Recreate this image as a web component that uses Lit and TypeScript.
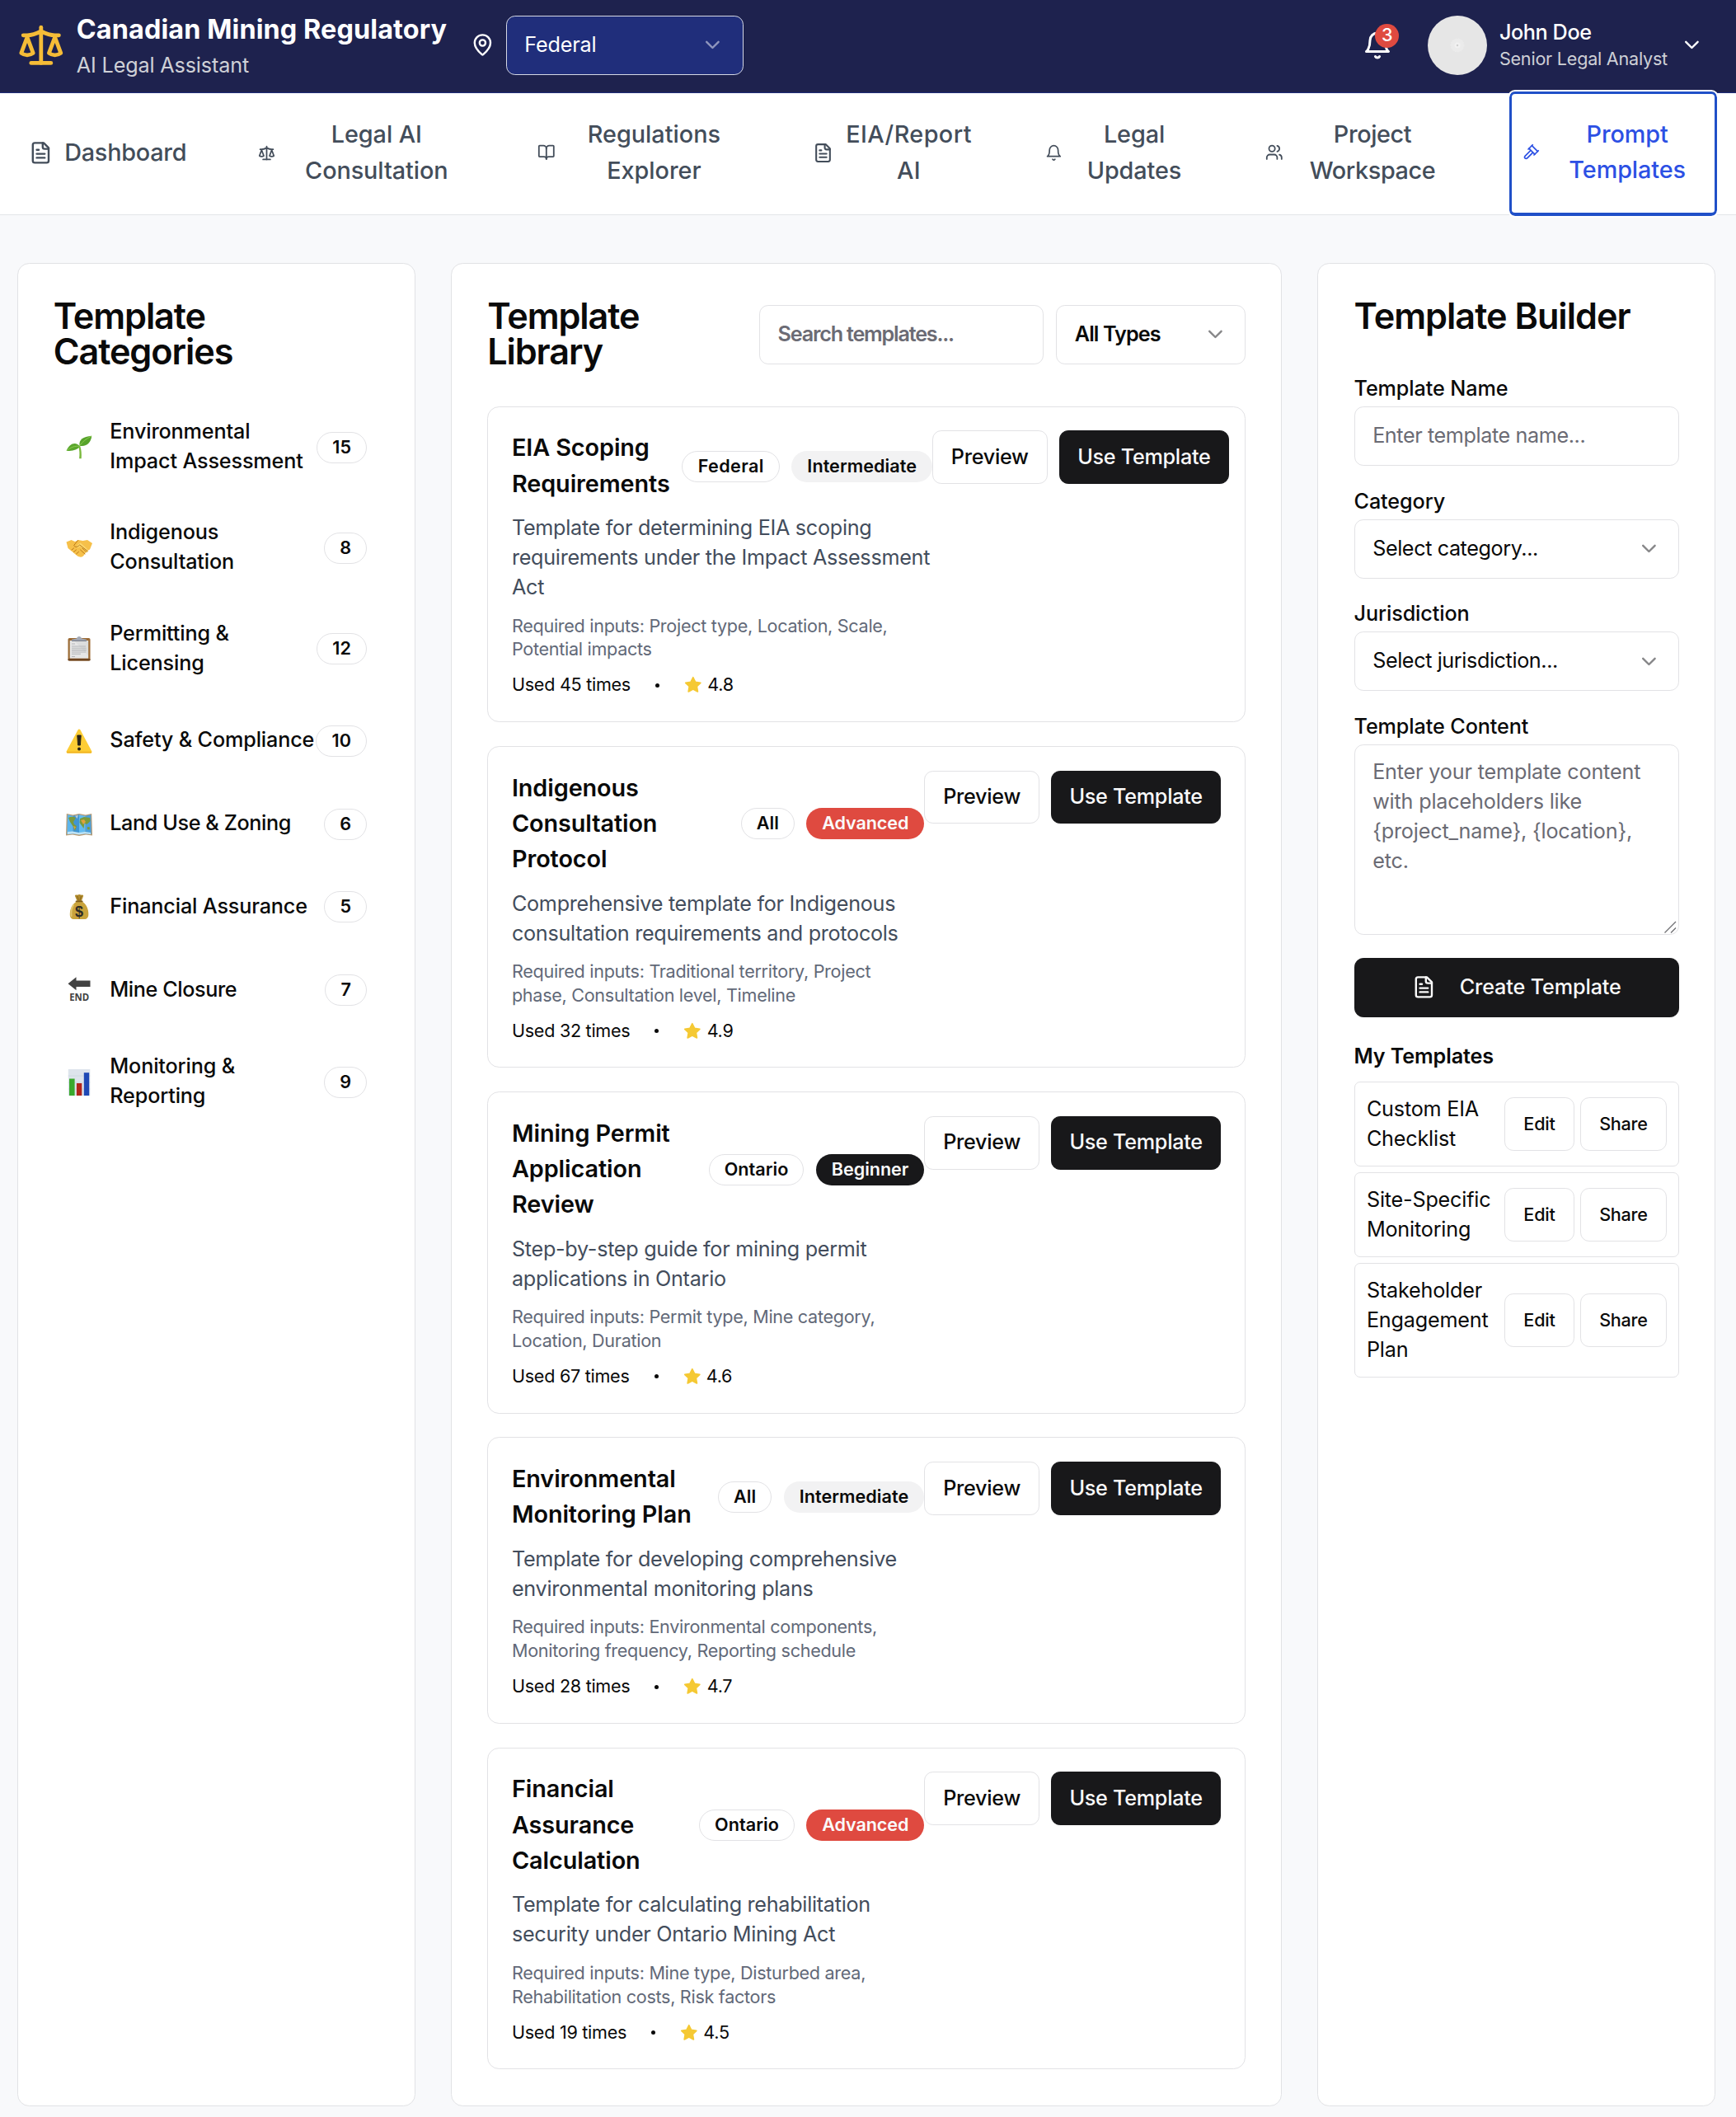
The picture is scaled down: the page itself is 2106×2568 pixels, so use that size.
import { LitElement, html, svg, css, TemplateResult, SVGTemplateResult } from "lit";
import { customElement, property } from "lit/decorators.js";

const ICONS: Record<string, SVGTemplateResult> = {
  scale: svg`<path d="m16 16 3-8 3 8c-.87.65-1.92 1-3 1s-2.13-.35-3-1Z"/><path d="m2 16 3-8 3 8c-.87.65-1.92 1-3 1s-2.13-.35-3-1Z"/><path d="M7 21h10"/><path d="M12 3v18"/><path d="M3 7h2c2 0 5-1 7-2 2 1 5 2 7 2h2"/>`,
  pin: svg`<path d="M20 10c0 4.993-5.539 10.193-7.399 11.799a1 1 0 0 1-1.202 0C9.539 20.193 4 14.993 4 10a8 8 0 0 1 16 0"/><circle cx="12" cy="10" r="3"/>`,
  chevron: svg`<path d="m6 9 6 6 6-6"/>`,
  bell: svg`<path d="M6 8a6 6 0 0 1 12 0c0 7 3 9 3 9H3s3-2 3-9"/><path d="M10.3 21a1.94 1.94 0 0 0 3.4 0"/>`,
  file: svg`<path d="M15 2H6a2 2 0 0 0-2 2v16a2 2 0 0 0 2 2h12a2 2 0 0 0 2-2V7Z"/><path d="M14 2v4a2 2 0 0 0 2 2h4"/><path d="M10 9H8"/><path d="M16 13H8"/><path d="M16 17H8"/>`,
  book: svg`<path d="M12 7v14"/><path d="M3 18a1 1 0 0 1-1-1V4a1 1 0 0 1 1-1h5a4 4 0 0 1 4 4 4 4 0 0 1 4-4h5a1 1 0 0 1 1 1v13a1 1 0 0 1-1 1h-6a3 3 0 0 0-3 3 3 3 0 0 0-3-3z"/>`,
  users: svg`<path d="M16 21v-2a4 4 0 0 0-4-4H6a4 4 0 0 0-4 4v2"/><circle cx="9" cy="7" r="4"/><path d="M22 21v-2a4 4 0 0 0-3-3.87"/><path d="M16 3.13a4 4 0 0 1 0 7.75"/>`,
  gavel: svg`<path d="m14 13-7.5 7.5c-.83.83-2.17.83-3 0a2.12 2.12 0 0 1 0-3L11 10"/><path d="m16 16 6-6"/><path d="m8 8 6-6"/><path d="m9 7 8 8"/><path d="m21 11-8-8"/>`,
  star: svg`<path fill="currentColor" d="M12 2l3.09 6.26L22 9.27l-5 4.87 1.18 6.88L12 17.77l-6.18 3.25L7 14.14 2 9.27l6.91-1.01L12 2z"/>`,
};

function icon(name: string, size: number): TemplateResult {
  return html`<svg class="icon" width=${size} height=${size} viewBox="0 0 24 24" fill="none" stroke="currentColor" stroke-width="2" stroke-linecap="round" stroke-linejoin="round">${ICONS[name]}</svg>`;
}

const PICTOS: Record<string, SVGTemplateResult> = {
  seedling: svg`<path d="M17.2 14c1.6 4.600 1.900 9.500 1.500 15.200h-2.600c.7-5.400.3-10.600-.8-14.600z" fill="#79b83c"/><path d="M16.500 13.700C15.500 6.500 20.500 2.500 31.300 1.800 30.200 10.200 25.500 15 16.500 13.700z" fill="#57a32b"/><path d="M17 13.300C20 8.500 25 5 31 2" stroke="#8bcb4e" stroke-width="1" fill="none"/><path d="M17 14.600C12.500 8.600 4.500 10 .5 19.800 8 20.700 13.500 19 17 14.600z" fill="#5aa72e"/><path d="M1 19.500C6 15.500 11 13.700 16.500 14.300" stroke="#8bcb4e" stroke-width="1" fill="none"/>`,
  handshake: svg`<path d="M.5 8.500 6.500 6l4.500 2 4-2 5.500 1L26 6l6 4-3 7.500-3 1.500-5 6.500c-2.500 2-5 1-7 0L8 20.500 2.500 16z" fill="#f6c04a"/><path d="m14 12 3.500-2.500 8.500 7.500 1 2.500-1.500 1.500-8-7-3 1.500-2.500-.8z" fill="#fbd86f"/><path d="m14.500 6.500-4.800 6c1.500 3.500 5 1.500 7-.5l9.500 7.500M7 18l2.500-2M9.500 20.500l3-2.500M12.500 23l3-2.700M17.500 18l5.500 5M20 16l5 4.500" stroke="#bb7a18" stroke-width="1" stroke-linecap="round" fill="none"/>`,
  clipboard: svg`<rect x="2.500" y="3" width="27" height="27.500" rx="1.800" fill="#9c6b35"/><rect x="2.500" y="28" width="27" height="2.500" rx="1.200" fill="#6e4520"/><path d="M4.800 6h22.400v21.500H4.800z" fill="#dcdddd"/><path d="M4.800 6h5L27 24v3.500H4.800z" fill="#ededed" opacity=".6"/><path d="M7 10h4M7 13h17M7 15.300h17.500M7 17.600h17.500M7 20h17M7 22.300h11M7 25.500h4" stroke="#b4b6b9" stroke-width="1.100"/><path d="M7 6.500V4.800l6-1.300c.5-3.500 5.500-3.500 6 0l6 1.300v1.700z" fill="#a3a9b5"/><path d="M7 6.300h18" stroke="#6f7581" stroke-width="1"/>`,
  warning: svg`<path d="M16 3.200 29.800 29H2.200z" fill="#fdcd35" stroke="#fdcd35" stroke-width="3.400" stroke-linejoin="round"/><path d="M1 29.500h30" stroke="#f0b021" stroke-width="1.500"/><path d="M13.800 9h4.400l-.8 12h-2.800z" fill="#2a2416" stroke="#2a2416" stroke-linejoin="round"/><circle cx="16" cy="25.600" r="2" fill="#2a2416"/>`,
  map: svg`<path d="m.8 3 7.800 1.500L16 3l7.800 1.500L31.200 3 32 29.500l-7.800-1L16 30l-8-1.500-8 1z" fill="#b89b73"/><path d="m2 4.300 6.600 1.400v21.500L1.300 28z" fill="#5cb5ec"/><path d="m8.600 5.700 7.400-1.400v24l-7.400-1.100z" fill="#3f95d4"/><path d="m16 4.300 7.600 1.400v21.500L16 28.300z" fill="#62bbf0"/><path d="m23.600 5.700 6.600-1.400.5 23.700-7.100-.8z" fill="#4aa0dd"/><path d="M3 8c3-2 6-1.500 9 0l-3 5 1 3 3 2-2 6-2-5-4-6zM17 9l5-2 7 1 .5 4-3 3-2 1-2-2-1 7-2-3-3-4zM26 19l3 .5-.5 3-2.500-.5z" fill="#7a9a3c"/><path d="m18 11 4-1 2 3-3 3zM9 18l3 1-1.500 3z" fill="#dfa23d"/><path d="M11 5.500 15 5l-1.500 4z" fill="#b7c9d6"/><path d="m2 25 6-.5 8 1.500 7-1 7 1v2l-7-.8-7 1.200-8-1.200-6 .8z" fill="#bfe3f5"/>`,
  money: svg`<path d="M11 3c-.5-1.500 1.500-2 3-1.200C15 .8 17.500.8 18.500 1.800 20.500 1 21.500 2 21 3.200L18.800 9h-5.200z" fill="#b18b2d"/><path d="m13.500 2.800 2 5M18.500 2.800l-1.500 5" stroke="#7e5d18" stroke-width=".8"/><path d="M13 9.500h6.500c5 3 8.200 9 7.800 16 0 3.500-2 5.500-5 5.500H10c-3.300 0-5.200-2-5.200-5.500C4.700 18.500 8 12.500 13 9.500z" fill="#c9a33c"/><path d="M9 14c-2.500 3.500-3 8-2.500 13" stroke="#e2c772" stroke-width="2" stroke-linecap="round" fill="none"/><path d="M12.500 9.300h7.200" stroke="#7d5c1c" stroke-width="1.800" stroke-linecap="round"/><text x="16" y="27.500" text-anchor="middle" font-family="Liberation Sans, sans-serif" font-weight="700" font-size="18" fill="#2d2b26">$</text>`,
  end: svg`<path d="M2.500 8.300 12.500.3v4.200h17v7.400h-17v4.300z" fill="#424242"/><text x="16.200" y="28.800" text-anchor="middle" font-family="Open Sans, sans-serif" font-weight="700" font-size="12.500" textLength="24" lengthAdjust="spacingAndGlyphs" fill="#424242">END</text>`,
  chart: svg`<rect x="2.800" y="0" width="26.500" height="32" fill="#dde4ec"/><path d="M2.800 8h26.500M2.800 16h26.500M2.800 24h26.500" stroke="#cbd5e0" stroke-width=".8"/><rect x="4" y="11.500" width="6.600" height="20.500" fill="#3aa92d"/><rect x="12.900" y="17" width="6.400" height="15" fill="#b3251b"/><rect x="21.800" y="4.200" width="6.400" height="27.800" fill="#1f49b5"/>`,
};

interface NavEntry { name: string; size: number; lines: string[]; cls: string; }
const NAV: NavEntry[] = [
  { name: "file", size: 28.8, lines: ["Dashboard"], cls: "n1" },
  { name: "scale", size: 21, lines: ["Legal AI", "Consultation"], cls: "n2" },
  { name: "book", size: 21.6, lines: ["Regulations", "Explorer"], cls: "n3" },
  { name: "file", size: 25, lines: ["EIA/Report", "AI"], cls: "n4" },
  { name: "bell", size: 20.8, lines: ["Legal", "Updates"], cls: "n5" },
  { name: "users", size: 21.6, lines: ["Project", "Workspace"], cls: "n6" },
  { name: "gavel", size: 21, lines: ["Prompt", "Templates"], cls: "active" },
];

const CATEGORIES: [string, string[], number][] = [
  ["seedling", ["Environmental", "Impact Assessment"], 15],
  ["handshake", ["Indigenous", "Consultation"], 8],
  ["clipboard", ["Permitting &", "Licensing"], 12],
  ["warning", ["Safety & Compliance"], 10],
  ["map", ["Land Use & Zoning"], 6],
  ["money", ["Financial Assurance"], 5],
  ["end", ["Mine Closure"], 7],
  ["chart", ["Monitoring &", "Reporting"], 9],
];

interface Card { title: string[]; scope: string; level: string; desc: string[]; inputs: string[]; used: number; rating: string; wide?: boolean; }
const CARDS: Card[] = [
  { title: ["EIA Scoping", "Requirements"], scope: "Federal", level: "Intermediate", desc: ["Template for determining EIA scoping", "requirements under the Impact Assessment", "Act"], inputs: ["Required inputs: Project type, Location, Scale,", "Potential impacts"], used: 45, rating: "4.8", wide: true },
  { title: ["Indigenous", "Consultation", "Protocol"], scope: "All", level: "Advanced", desc: ["Comprehensive template for Indigenous", "consultation requirements and protocols"], inputs: ["Required inputs: Traditional territory, Project", "phase, Consultation level, Timeline"], used: 32, rating: "4.9" },
  { title: ["Mining Permit", "Application", "Review"], scope: "Ontario", level: "Beginner", desc: ["Step-by-step guide for mining permit", "applications in Ontario"], inputs: ["Required inputs: Permit type, Mine category,", "Location, Duration"], used: 67, rating: "4.6" },
  { title: ["Environmental", "Monitoring Plan"], scope: "All", level: "Intermediate", desc: ["Template for developing comprehensive", "environmental monitoring plans"], inputs: ["Required inputs: Environmental components,", "Monitoring frequency, Reporting schedule"], used: 28, rating: "4.7" },
  { title: ["Financial", "Assurance", "Calculation"], scope: "Ontario", level: "Advanced", desc: ["Template for calculating rehabilitation", "security under Ontario Mining Act"], inputs: ["Required inputs: Mine type, Disturbed area,", "Rehabilitation costs, Risk factors"], used: 19, rating: "4.5" },
];

const MINE: string[][] = [["Custom EIA", "Checklist"], ["Site-Specific", "Monitoring"], ["Stakeholder", "Engagement", "Plan"]];

const rows = (lines: string[]) => lines.map((l, i) => (i ? html`<br />${l}` : html`${l}`));

const shared = css`
  :host, * { box-sizing: border-box; }
  .icon { display: block; flex: none; }
  h2, h3, p { margin: 0; }
  h2 { font-size: 43.2px; line-height: 43.2px; font-weight: 600; letter-spacing: -0.025em; margin-top: -1.8px; }
  .btn { display: flex; align-items: center; justify-content: center; border: 1px solid #e2e2e5; border-radius: 10.8px; background: #fff; white-space: nowrap; height: 64.8px; font-size: 25.2px; font-weight: 500; letter-spacing: -0.011em; padding-bottom: 2px; }
  .dark { background: #18181a; border-color: #18181a; color: #fafafa; }
  .badge { display: flex; align-items: center; flex: none; border: 1px solid #e2e2e5; border-radius: 19px; height: 38px; padding: 0 18px 2px; font-size: 21.6px; font-weight: 600; letter-spacing: 0.002em; white-space: nowrap; }
  .field { display: flex; align-items: center; justify-content: space-between; height: 72px; border: 1px solid #e2e2e5; border-radius: 10.8px; padding: 0 21.6px 2px; font-size: 25.2px; letter-spacing: -0.016em; white-space: nowrap; background: #fff; }
  .chev { color: #868688; display: flex; padding-top: 1.5px; }
  .muted { color: #6b6b74; }
`;

@customElement("app-header")
export class AppHeader extends LitElement {
  static styles = [shared, css`
    :host { display: flex; align-items: flex-start; height: 113px; padding: 0 39.300px 0 20.800px; background: #1e224e; border-bottom: 1px solid #202d7a; color: #fff; }
    .logo { color: #f5bc37; margin: 26.200px 14.4px 0 0; }
    .brand { width: 477.800px; padding-top: 12.300px; white-space: nowrap; }
    .name { font-size: 32.4px; line-height: 48px; font-weight: 700; letter-spacing: 0.003em; }
    .sub { margin-top: .900px; font-size: 25.2px; line-height: 36px; color: #ced0d6; letter-spacing: -0.006em; }
    .pin { margin: 40.100px 14.4px 0 0; }
    .field { width: 288px; margin-top: 19px; background: #202e7b; border-color: #d5d8e4; letter-spacing: -0.008em; }
    .field .chev { color: #8f96bd; }
    .grow { flex: 1; }
    .alerts { position: relative; margin: 37px 42.700px 0 0; }
    .count { position: absolute; left: 15px; top: -8px; width: 28.8px; height: 28.8px; border-radius: 50%; background: #df4a40; font-size: 21.6px; line-height: 27.500px; text-align: center; font-weight: 500; }
    .avatar { display: flex; align-items: center; justify-content: center; width: 72px; height: 72px; margin: 19px 14.800px 0 0; border-radius: 50%; background: #e6e6e6; }
    .who { width: 219px; padding-top: 21px; white-space: nowrap; }
    .person { font-size: 25.2px; line-height: 36px; font-weight: 500; letter-spacing: -0.016em; }
    .role { font-size: 21.6px; line-height: 28.8px; color: #ced0d6; letter-spacing: -0.011em; }
    .more { margin-top: 40px; }
  `];
  render() {
    return html`
      <div class="logo">${icon("scale", 57.6)}</div>
      <div class="brand"><div class="name">Canadian Mining Regulatory</div><div class="sub">AI Legal Assistant</div></div>
      <div class="pin">${icon("pin", 28.8)}</div>
      <div class="field"><span>Federal</span><span class="chev">${icon("chevron", 28.8)}</span></div>
      <div class="grow"></div>
      <div class="alerts">${icon("bell", 36)}<span class="count">3</span></div>
      <div class="avatar"><svg width="18" height="18" viewBox="0 0 18 18"><circle cx="9" cy="9" r="8" fill="#ebebeb" stroke="#eee" stroke-dasharray="1.500 2"/><circle cx="9" cy="9" r="3.500" fill="#f1f1f1"/><circle cx="9" cy="9" r="1.200" fill="#cfcfcf"/></svg></div>
      <div class="who"><div class="person">John Doe</div><div class="role">Senior Legal Analyst</div></div>
      <div class="more">${icon("chevron", 28.8)}</div>`;
  }
}

@customElement("app-nav")
export class AppNav extends LitElement {
  static styles = [shared, css`
    :host { display: grid; grid-template-columns: 278.300px 338.700px 333.800px 282.300px 267.100px 295.400px 252px; height: 148px; padding-left: 35px; background: #fff; border-bottom: 1px solid #e3e5e9; color: #434d5a; }
    .item { display: flex; align-items: center; height: 147px; padding-bottom: 3px; font-size: 28.8px; line-height: 43.2px; font-weight: 500; letter-spacing: -0.003em; white-space: nowrap; text-align: center; }
    .item span { margin-top: -1px; }
    .n1 { gap: 14.4px; letter-spacing: -0.008em; } .n2 { gap: 35.800px; } .n3 { gap: 39.200px; letter-spacing: 0; } .n4 { gap: 15.500px; letter-spacing: 0.014em; }
    .n5 { gap: 29.800px; } .n6 { gap: 32px; letter-spacing: -0.013em; }
    .active { position: relative; gap: 35.200px; height: 150.300px; margin-top: -1.700px; padding: 0 0 2px 13.600px; color: #2c50e4; border: 3.500px solid #2050c8; border-bottom-width: 4.500px; border-radius: 7px; outline: 2px solid #fff; background: #fff; }
  `];
  render() {
    return html`${NAV.map((n) => html`<div class="item ${n.cls}">${icon(n.name, n.size)}<span>${rows(n.lines)}</span></div>`)}`;
  }
}

@customElement("category-list")
export class CategoryList extends LitElement {
  static styles = [shared, css`
    :host { display: block; }
    h2 { margin-left: -0.700px; }
    .list { display: flex; flex-direction: column; gap: 7.2px; margin-top: 37px; }
    .row { display: flex; align-items: center; padding: 21.6px 14.4px; }
    .pic { display: block; flex: none; margin-right: 21.500px; overflow: visible; }
    .label { flex: 1; min-width: 0; display: flex; align-items: center; min-height: 50.4px; font-size: 25.2px; line-height: 36px; font-weight: 500; letter-spacing: -0.006em; white-space: nowrap; }
    .label span { margin: -1.500px 0 1.500px; }
    .row:nth-child(5) .label, .row:nth-child(7) .label { letter-spacing: -0.016em; }
    .row .badge { padding-left: 18.2px; padding-right: 18.2px; }
  `];
  render() {
    return html`<h2>Template<br />Categories</h2>
      <div class="list">${CATEGORIES.map(([pic, lines, n]) => html`<div class="row">
        <svg class="pic" width="32" height="32" viewBox="0 0 32 32">${PICTOS[pic]}</svg>
        <span class="label"><span>${rows(lines)}</span></span><span class="badge">${n}</span></div>`)}</div>`;
  }
}

@customElement("template-card")
export class TemplateCard extends LitElement {
  @property({ attribute: false }) card!: Card;
  static styles = [shared, css`
    :host { display: flex; border: 1px solid #e2e2e5; border-radius: 14.4px; padding: 28.8px; }
    .main { flex: none; width: 500.300px; }
    .main.wide { width: 510px; }
    .top { display: flex; align-items: center; gap: 14.4px; }
    h3 { flex: 1; min-width: 0; font-size: 28.8px; line-height: 43.2px; font-weight: 600; letter-spacing: -0.003em; white-space: nowrap; margin: -1px 0 1px; }
    .level { border-color: transparent; }
    .Federal { padding-left: 18.200px; padding-right: 18.200px; letter-spacing: 0.018em; }
    .Intermediate { background: #f2f2f3; }
    .Advanced { background: #df4a40; color: #fafafa; letter-spacing: -0.006em; }
    .Beginner { background: #18181a; color: #fafafa; letter-spacing: -0.003em; }
    .desc { margin-top: 13.400px; font-size: 25.2px; line-height: 36px; color: #434d5c; letter-spacing: -0.0115em; white-space: nowrap; }
    .inputs { margin-top: 14.400px; font-size: 21.6px; line-height: 28.8px; color: #626978; letter-spacing: -0.014em; white-space: nowrap; }
    .stats { display: flex; align-items: center; margin-top: 14.200px; margin-bottom: 1.200px; font-size: 21.6px; line-height: 28.8px; letter-spacing: -0.0132em; }
    .dot { width: 5px; height: 5px; border-radius: 50%; background: #0a0a0a; margin: 1px 30px 0 30px; }
    .star { color: #f5c934; margin: 1px 6.7px 0 0; }
    .actions { display: flex; gap: 14.400px; flex: none; }
    .preview { width: 139.700px; }
    .use { width: 205.600px; }
  `];
  render() {
    const c = this.card;
    return html`<div class="main ${c.wide ? "wide" : ""}">
        <div class="top"><h3>${rows(c.title)}</h3><span class="badge ${c.scope}">${c.scope}</span><span class="badge level ${c.level}">${c.level}</span></div>
        <p class="desc">${rows(c.desc)}</p>
        <p class="inputs">${rows(c.inputs)}</p>
        <div class="stats"><span>Used ${c.used} times</span><span class="dot"></span><span class="star">${icon("star", 21.6)}</span><span>${c.rating}</span></div>
      </div>
      <div class="actions"><div class="btn preview">Preview</div><div class="btn dark use">Use Template</div></div>`;
  }
}

@customElement("template-library")
export class TemplateLibrary extends LitElement {
  static styles = [shared, css`
    :host { display: block; }
    .head { display: flex; align-items: center; height: 86.4px; gap: 15px; margin-bottom: 42.800px; }
    h2 { flex: 1; margin-top: -3px; }
    .field { font-weight: 600; margin-top: -1px; }
    .search { width: 345.200px; letter-spacing: -0.048em; }
    .types { width: 229.800px; letter-spacing: -0.037em; }
    .cards { display: flex; flex-direction: column; gap: 28.6px; }
  `];
  render() {
    return html`<div class="head"><h2>Template<br />Library</h2>
        <div class="field search muted">Search templates...</div>
        <div class="field types"><span>All Types</span><span class="chev">${icon("chevron", 28.8)}</span></div></div>
      <div class="cards">${CARDS.map((c) => html`<template-card .card=${c}></template-card>`)}</div>`;
  }
}

@customElement("template-builder")
export class TemplateBuilder extends LitElement {
  static styles = [shared, css`
    :host { display: block; margin-right: -0.800px; }
    .form { margin-top: 52px; display: flex; flex-direction: column; }
    h2 { letter-spacing: -0.023em; }
    .label { height: 36px; font-size: 25.2px; line-height: 28.800px; font-weight: 500; letter-spacing: -0.004em; }
    .field { margin-bottom: 28.8px; }
    .area { position: relative; height: 230.4px; margin-bottom: 28.6px; padding: 13.500px 21.6px; border: 1px solid #e2e2e5; border-radius: 10.8px; font-size: 25.2px; line-height: 36px; letter-spacing: -0.007em; white-space: nowrap; }
    .grip { position: absolute; right: 1px; bottom: 0; }
    .create { height: 72px; gap: 28.8px; letter-spacing: -0.005em; }
    .mine { margin-top: 28.500px; font-size: 25.2px; line-height: 36px; font-weight: 600; letter-spacing: -0.005em; }
    .items { display: flex; flex-direction: column; gap: 7.2px; margin-top: 13.8px; }
    .item { display: flex; align-items: center; gap: 7.2px; padding: 14.4px; border: 1px solid #e2e2e5; border-radius: 7px; }
    .name { flex: 1; font-size: 25.2px; line-height: 36px; letter-spacing: -0.008em; white-space: nowrap; margin: -0.500px 0 0.500px; }
    .item .btn { font-size: 21.6px; }
    .edit { width: 84.600px; }
    .share { width: 105px; }
  `];
  render() {
    return html`<h2>Template Builder</h2>
      <div class="form">
        <div class="label">Template Name</div><div class="field muted">Enter template name...</div>
        <div class="label">Category</div><div class="field"><span>Select category...</span><span class="chev">${icon("chevron", 28.8)}</span></div>
        <div class="label">Jurisdiction</div><div class="field"><span>Select jurisdiction...</span><span class="chev">${icon("chevron", 28.8)}</span></div>
        <div class="label">Template Content</div>
        <div class="area muted">Enter your template content<br />with placeholders like<br />{project_name}, {location},<br />etc.
          <svg class="grip" width="17" height="17" viewBox="0 0 17 17"><path d="M1.500 15.500 15 2M9 15.500 15 9.500" stroke="#6f6f73" stroke-width="1.300"/></svg></div>
        <div class="btn dark create">${icon("file", 28.8)}<span>Create Template</span></div>
        <div class="mine">My Templates</div>
        <div class="items">${MINE.map((m) => html`<div class="item"><span class="name">${rows(m)}</span><div class="btn edit">Edit</div><div class="btn share">Share</div></div>`)}</div>
      </div>`;
  }
}

@customElement("app-root")
export class AppRoot extends LitElement {
  static styles = css`
    :host { display: block; box-sizing: border-box; height: 2568px; overflow: hidden; background: #f8f9fb; color: #0a0a0a; font-family: Inter, "Liberation Sans", sans-serif; }
    .grid { display: grid; grid-template-columns: 482.600px 1008.200px 482.400px; gap: 43.200px; padding: 58.200px 0 0 21.200px; }
    .panel { box-sizing: border-box; height: 2235.500px; border: 1px solid #e1e2e5; border-radius: 14.4px; background: #fff; padding: 43.2px; }
  `;
  render() {
    return html`<app-header></app-header><app-nav></app-nav>
      <main class="grid">
        <section class="panel"><category-list></category-list></section>
        <section class="panel"><template-library></template-library></section>
        <section class="panel"><template-builder></template-builder></section>
      </main>`;
  }
}
